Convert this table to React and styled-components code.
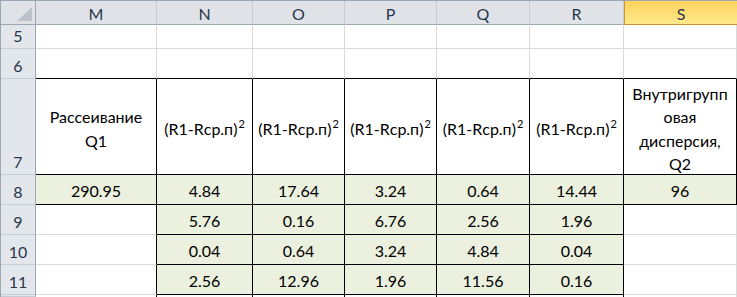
import styled, { createGlobalStyle, css } from "styled-components";

const GlobalStyle = createGlobalStyle`
  html, body {
    margin: 0;
    padding: 0;
    background: #fff;
  }
  body {
    font-family: Lato, "Noto Sans", sans-serif;
    color: #000;
  }
`;

const GRID = "#dadada";
const HEAD_LINE = "#9ea6b0";
const HEAD_SEP = "#c6ccd3";
const GREEN = "#ebf1de";

// Excel-like sheet: header row + row headers + cells
const Sheet = styled.div`
  display: grid;
  grid-template-columns: 35px 121px 96px 92px 92px 93px 94px 113px;
  grid-template-rows: 24px 24px 30px 96px 30px 30px 30px 30px 2px;
  width: 737px;
  height: 297px;
  border-top: 1px solid ${HEAD_LINE};
  border-left: 1px solid ${HEAD_LINE};
  box-sizing: border-box;
  overflow: hidden;
  font-size: 16px;
`;

const ColHead = styled.div`
  box-sizing: border-box;
  display: flex;
  align-items: center;
  justify-content: center;
  background: #dfe3e8;
  color: #28364a;
  border-right: 1px solid ${HEAD_SEP};
  border-bottom: 1px solid ${HEAD_LINE};
  padding-top: 1px;
  ${p =>
    p.$selected &&
    css`
      background: linear-gradient(#fed35c, #ffe98c);
      border-left: 1px solid #c8973a;
      border-right: none;
      border-bottom: 1px solid #c8973a;
    `}
`;

const Corner = styled(ColHead)`
  justify-content: flex-end;
  align-items: flex-end;
  padding: 0 3px 3px 0;
  border-right: 1px solid ${HEAD_LINE};
`;

const Triangle = styled.div`
  width: 0;
  height: 0;
  border-left: 15px solid transparent;
  border-bottom: 14px solid #bcc2c9;
`;

const RowHead = styled.div`
  box-sizing: border-box;
  display: flex;
  align-items: flex-end;
  justify-content: center;
  padding-bottom: 1px;
  background: #e3e6ea;
  color: #28364a;
  border-right: 1px solid ${HEAD_LINE};
  border-bottom: 1px solid ${HEAD_SEP};
  line-height: 22px;
  overflow: hidden;
`;

const Cell = styled.div`
  box-sizing: border-box;
  display: flex;
  justify-content: center;
  align-items: ${p => (p.$top ? "center" : "flex-end")};
  text-align: center;
  padding-bottom: ${p => (p.$top ? "0" : "2px")};
  padding-top: ${p => (p.$top ? "4px" : "0")};
  line-height: ${p => (p.$top ? "23.5px" : "22px")};
  background: ${p => (p.$green ? GREEN : "#fff")};
  border-right: 1px solid ${p => (p.$r ? "#000" : GRID)};
  border-bottom: 1px solid ${p => (p.$b ? "#000" : GRID)};
  white-space: nowrap;
`;

const Sup = styled.sup`
  font-size: 11px;
  line-height: 0;
  vertical-align: 7px;
  margin-left: 1px;
`;

const cols = ["M", "N", "O", "P", "Q", "R", "S"];

const Formula = () => (
  <span>
    (R1-Rср.п)<Sup>2</Sup>
  </span>
);

const rows = [
  { n: 5, cells: cols.map(() => ({})) },
  { n: 6, cells: cols.map(() => ({ b: true })) },
  {
    n: 7,
    top: true,
    cells: [
      { t: <>Рассеивание<br />Q1</>, r: true, b: true },
      ...[0, 1, 2, 3, 4].map(() => ({ t: <Formula />, r: true, b: true })),
      { t: <>Внутригрупп<br />овая<br />дисперсия,<br />Q2</>, r: true, b: true },
    ],
  },
  {
    n: 8,
    cells: ["290.95", "4.84", "17.64", "3.24", "0.64", "14.44", "96"].map(t => ({
      t,
      g: true,
      r: true,
      b: true,
    })),
  },
  { n: 9, vals: ["5.76", "0.16", "6.76", "2.56", "1.96"] },
  { n: 10, vals: ["0.04", "0.64", "3.24", "4.84", "0.04"] },
  { n: 11, vals: ["2.56", "12.96", "1.96", "11.56", "0.16"] },
  // only a sliver of row 12 is visible, without its number
  { n: 12, hidden: true, cells: [{ r: true }, ...[0, 1, 2, 3, 4].map(() => ({ r: true })), {}] },
];

const expand = row =>
  row.cells ||
  [
    { r: true },
    ...row.vals.map(t => ({ t, g: true, r: true, b: true })),
    {},
  ];

const Row = ({ row }) => (
  <>
    <RowHead>{row.hidden ? null : row.n}</RowHead>
    {expand(row).map((c, i) => (
      <Cell key={i} $green={c.g} $r={c.r} $b={c.b} $top={row.top}>
        {c.t}
      </Cell>
    ))}
  </>
);

const App = () => (
  <>
    <GlobalStyle />
    <Sheet>
      <Corner>
        <Triangle />
      </Corner>
      {cols.map(c => (
        <ColHead key={c} $selected={c === "S"}>
          {c}
        </ColHead>
      ))}
      {rows.map(row => (
        <Row key={row.n} row={row} />
      ))}
    </Sheet>
  </>
);

export default App;
